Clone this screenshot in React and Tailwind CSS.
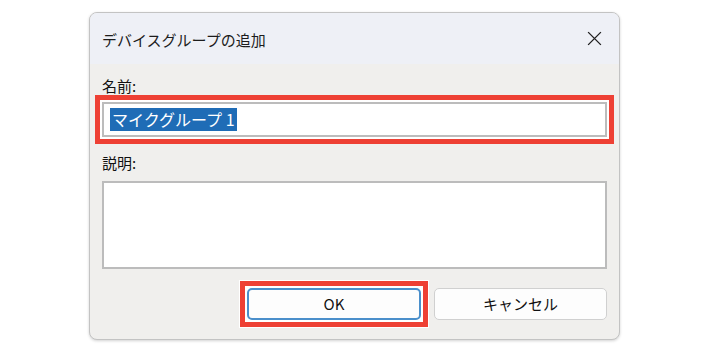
export default function App() {
  const font = { fontFamily: '"Noto Sans CJK JP", "Noto Sans", sans-serif' };

  return (
    <div className="w-[708px] h-[354px] bg-white pt-[12px] pl-[89px]" style={font}>
      {/* Dialog */}
      <div className="w-[531px] h-[328px] rounded-lg border border-[#c3c3c3] bg-[#f0efed] shadow-[0_1px_3px_rgba(0,0,0,0.18)] flex flex-col overflow-hidden">
        {/* Title bar */}
        <div className="h-[51px] shrink-0 bg-[#eef0f6] flex items-center justify-between pl-[12px] pr-[16px]">
          <span className="text-[15px] text-[#1c1c1c] leading-none pt-[2px]">デバイスグループの追加</span>
          <svg width="17" height="17" viewBox="0 0 16 16" className="text-[#222]">
            <path d="M2 2 L14 14 M14 2 L2 14" stroke="currentColor" strokeWidth="1.3" fill="none" />
          </svg>
        </div>

        {/* Body */}
        <div className="flex-1 flex flex-col px-3">
          <div className="mt-[12px] h-[20px] text-[15px] leading-[20px] text-[#111]">名前:</div>
          <div className="mt-[6px] h-[35px] bg-white border-2 border-[#bcbcbc] flex items-center pl-[6px] shadow-[0_0_0_2px_#fff] outline-[5px] outline-solid outline-[#ee4034] outline-offset-[2px]">
            <span className="bg-[#1f6cb6] text-white text-[16px] leading-[23px] px-[2px]">マイクグループ 1</span>
          </div>

          <div className="mt-[16px] h-[20px] text-[15px] leading-[20px] text-[#111]">説明:</div>
          <div className="mt-[8px] h-[88px] bg-white border-2 border-[#bcbcbc]" />

          <div className="mt-[19px] flex justify-end gap-[13px]">
            <div className="-m-[7px] border-[5px] border-[#ee4034] bg-white p-[2px] flex shadow-[0_0_0_1px_#fff]">
              <button className="w-[174px] h-[32px] rounded-[5px] bg-[#fdfdfd] border-2 border-[#4a8fcb] text-[15px] text-[#111]">
                OK
              </button>
            </div>
            <button className="w-[173px] h-[32px] rounded-[5px] bg-[#fdfdfd] border border-[#d0d0d0] text-[15px] text-[#111]">
              キャンセル
            </button>
          </div>
        </div>
      </div>
    </div>
  );
}
